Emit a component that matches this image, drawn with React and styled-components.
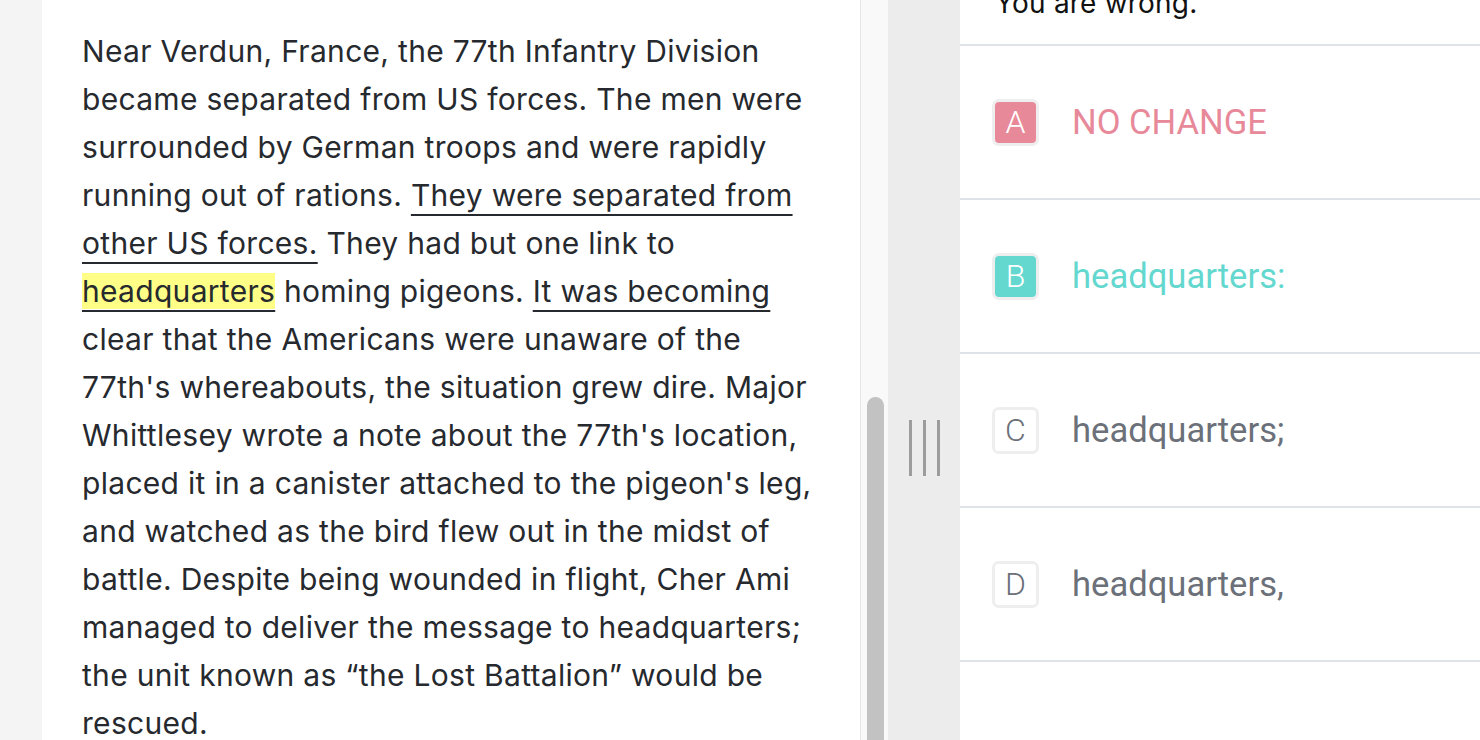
import React from 'react';
import styled, { createGlobalStyle } from 'styled-components';

const GlobalStyle = createGlobalStyle`
  html, body {
    margin: 0;
    padding: 0;
    background: #ffffff;
  }
`;

const choices = [
  { letter: 'A', text: 'NO CHANGE', tone: 'wrong' },
  { letter: 'B', text: 'headquarters:', tone: 'right' },
  { letter: 'C', text: 'headquarters;', tone: 'plain' },
  { letter: 'D', text: 'headquarters,', tone: 'plain' },
];

const toneColor = {
  wrong: '#e8899a',
  right: '#64d8cf',
  plain: '#6b7079',
};

function App() {
  return (
    <>
      <GlobalStyle />
      <Page>
        <Gutter />
        <PassagePanel>
          <Passage>
            Near Verdun, France, the 77th Infantry Division<br />
            became separated from US forces. The men were<br />
            surrounded by German troops and were rapidly<br />
            running out of rations. <Marked>They were separated from</Marked><br />
            <Marked>other US forces.</Marked> They had but one link to<br />
            <Marked highlight>headquarters</Marked> homing pigeons. <Marked>It was becoming</Marked><br />
            clear that the Americans were unaware of the<br />
            77th's whereabouts, the situation grew dire. Major<br />
            Whittlesey wrote a note about the 77th's location,<br />
            placed it in a canister attached to the pigeon's leg,<br />
            and watched as the bird flew out in the midst of<br />
            battle. Despite being wounded in flight, Cher Ami<br />
            managed to deliver the message to headquarters;<br />
            the unit known as “the Lost Battalion” would be<br />
            rescued.
          </Passage>
        </PassagePanel>
        <ScrollTrack>
          <ScrollThumb />
        </ScrollTrack>
        <Divider>
          <Grip>
            <GripLine />
            <GripLine />
            <GripLine />
          </Grip>
        </Divider>
        <AnswerPanel>
          <Feedback>
            <FeedbackText>You are wrong.</FeedbackText>
          </Feedback>
          {choices.map((c) => (
            <ChoiceRow key={c.letter}>
              <Badge>
                <BadgeInner tone={c.tone}>{c.letter}</BadgeInner>
              </Badge>
              <ChoiceText tone={c.tone}>{c.text}</ChoiceText>
            </ChoiceRow>
          ))}
        </AnswerPanel>
      </Page>
    </>
  );
}

const Page = styled.div`
  display: flex;
  height: 740px;
  overflow: hidden;
`;

const Gutter = styled.div`
  width: 42px;
  flex: none;
  background: #f4f4f4;
`;

const PassagePanel = styled.div`
  width: 819px;
  flex: none;
  background: #ffffff;
  border-right: 1px solid #e6e6e6;
  padding: 27px 0 0 40px;
  box-sizing: border-box;
`;

const Passage = styled.p`
  margin: 0;
  font-family: Inter, 'Noto Sans', sans-serif;
  font-size: 30px;
  letter-spacing: 0.3px;
  line-height: 48px;
  color: #26292e;
  white-space: nowrap;
`;

const Marked = styled.span`
  text-decoration: underline;
  text-decoration-thickness: 2px;
  text-underline-offset: 8px;
  text-decoration-color: #26292e;
  background: ${(p) => (p.highlight ? '#ffff88' : 'transparent')};
`;

const ScrollTrack = styled.div`
  width: 27px;
  flex: none;
  background: #f9f9f9;
  padding: 397px 4px 0 6px;
  box-sizing: border-box;
`;

const ScrollThumb = styled.div`
  width: 17px;
  height: 400px;
  background: #c2c2c2;
  border-radius: 9px 9px 0 0;
`;

const Divider = styled.div`
  width: 72px;
  flex: none;
  background: #ececec;
  display: flex;
  justify-content: center;
  padding-top: 420px;
  box-sizing: border-box;
`;

const Grip = styled.div`
  display: flex;
  gap: 11px;
  height: 56px;
`;

const GripLine = styled.div`
  width: 3px;
  height: 100%;
  background: #9c9c9c;
`;

const AnswerPanel = styled.div`
  flex: 1;
  background: #ffffff;
  display: flex;
  flex-direction: column;
`;

const Feedback = styled.div`
  height: 44px;
  border-bottom: 2px solid #dfe3e8;
  display: flex;
  align-items: flex-end;
  padding: 0 0 24px 35px;
  box-sizing: content-box;
  margin-top: -24px;
`;

const FeedbackText = styled.div`
  font-family: Inter, 'Noto Sans', sans-serif;
  font-size: 28px;
  letter-spacing: 0.2px;
  line-height: 34px;
  color: #111111;
`;

const ChoiceRow = styled.div`
  height: 152px;
  border-bottom: 2px solid #dfe3e8;
  display: flex;
  align-items: center;
  padding-left: 32px;
  gap: 33px;
  flex: none;
`;

const Badge = styled.div`
  width: 47px;
  height: 47px;
  box-sizing: border-box;
  border: 3px solid #eeeeee;
  border-radius: 7px;
  background: #ffffff;
  display: flex;
`;

const BadgeInner = styled.div`
  flex: 1;
  border-radius: 4px;
  background: ${(p) => (p.tone === 'plain' ? '#ffffff' : toneColor[p.tone])};
  color: ${(p) => (p.tone === 'plain' ? toneColor.plain : '#ffffff')};
  font-family: Roboto, 'Liberation Sans', sans-serif;
  font-size: 32px;
  font-weight: 300;
  line-height: 41px;
  text-align: center;
`;

const ChoiceText = styled.div`
  font-family: Roboto, 'Liberation Sans', sans-serif;
  font-size: 34.6px;
  color: ${(p) => toneColor[p.tone]};
`;

export default App;
